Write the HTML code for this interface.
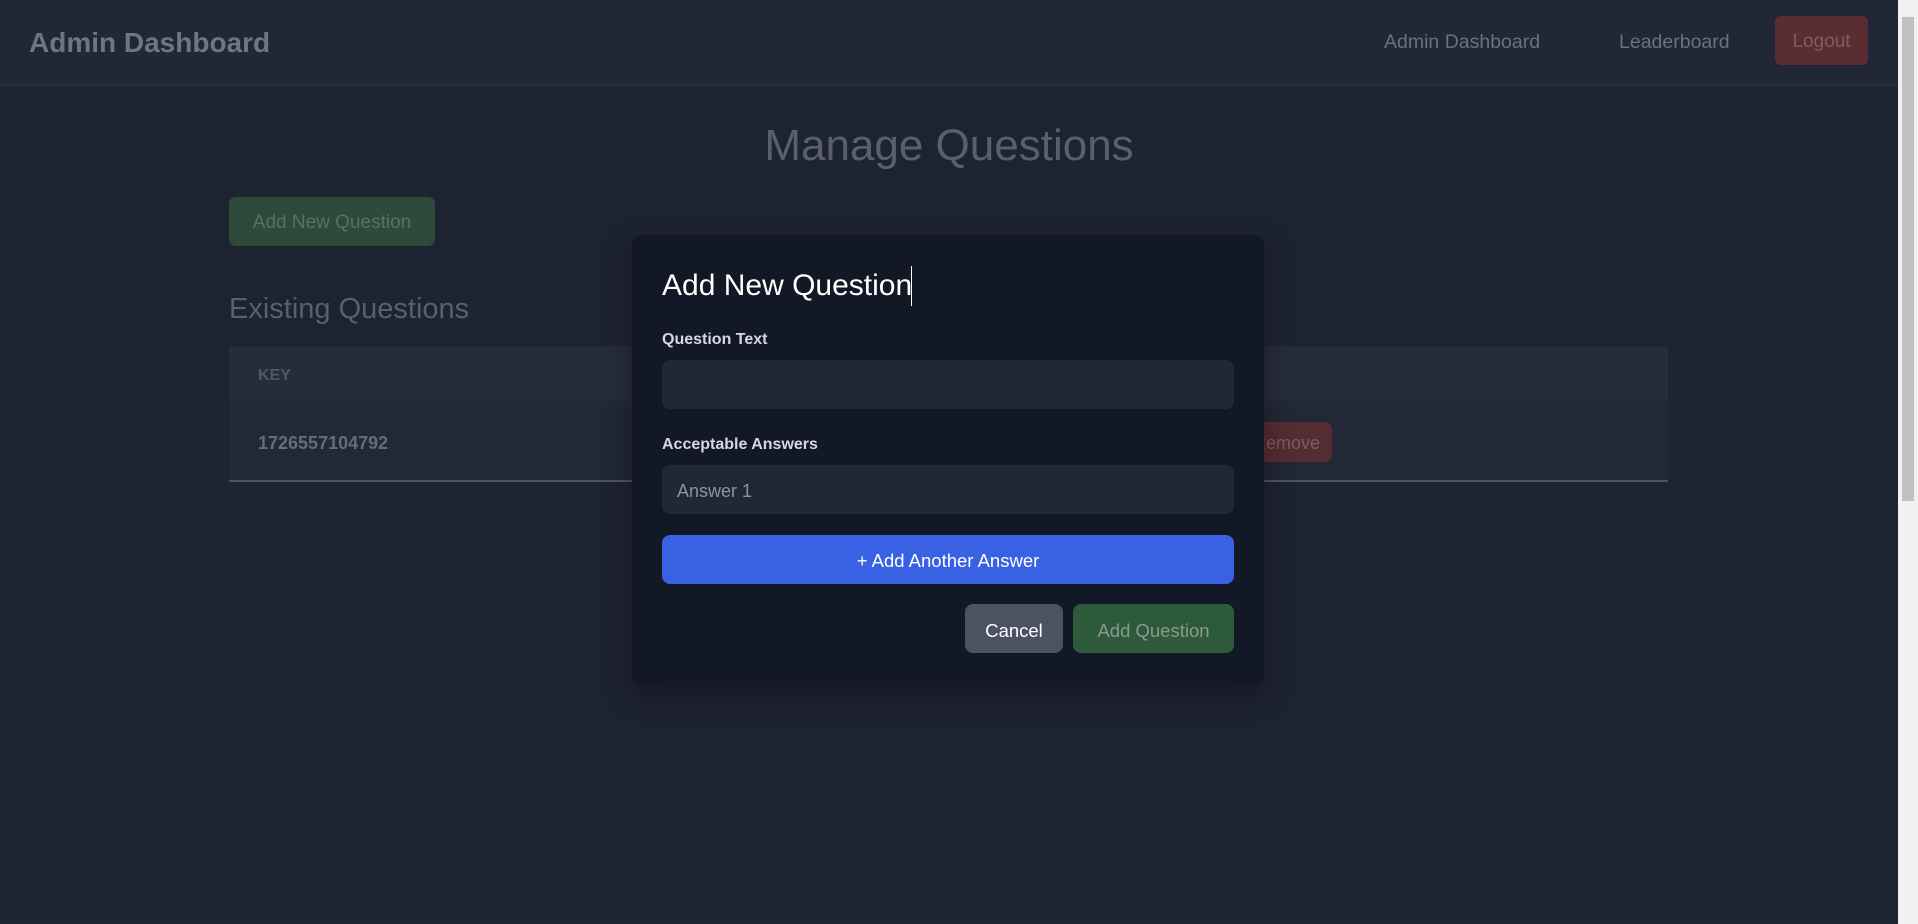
<!DOCTYPE html>
<html><head><meta charset="utf-8"><style>
*{box-sizing:border-box;margin:0;padding:0}
body{width:1918px;height:924px;overflow:hidden;background:#1e2331;font-family:"Liberation Sans",sans-serif;position:relative}
.a{position:absolute;white-space:nowrap}
.nav{position:absolute;left:0;top:0;width:1898px;height:86px;background:#212736;border-bottom:1px solid #2b3240}
.sb{position:absolute;left:1898px;top:0;width:20px;height:924px;background:#f1f1f1}
.thumb{position:absolute;left:1902px;top:17px;width:12px;height:484px;background:#c1c1c1}
.modal{position:absolute;left:632px;top:235px;width:632px;height:449px;background:#121826;border-radius:9px;box-shadow:0 10px 30px rgba(0,0,0,.35)}
.inp{position:absolute;left:30px;width:572px;height:49px;background:#212736;border-radius:8px}
.lbl{position:absolute;left:30px;font-size:16px;font-weight:bold;color:#d5d9df}
</style></head><body>
<div class="nav"></div>
<div class="a" style="left:29px;top:27px;font-size:28px;font-weight:bold;color:#6e7584">Admin Dashboard</div>
<div class="a" style="left:1384px;top:31px;font-size:19.5px;color:#6a7180">Admin Dashboard</div>
<div class="a" style="left:1619px;top:31px;font-size:19.5px;color:#6a7180">Leaderboard</div>
<div class="a" style="left:1775px;top:16px;width:93px;height:49px;background:#5a2d33;border-radius:6px;color:#7c5c62;font-size:19px;text-align:center;line-height:52px">Logout</div>
<div class="a" style="left:0;width:1898px;top:121px;text-align:center;font-size:44px;color:#595f6e">Manage Questions</div>
<div class="a" style="left:229px;top:197px;width:206px;height:49px;background:#2d4a3b;border-radius:7px;color:#5a7062;font-size:19px;text-align:center;line-height:51px">Add New Question</div>
<div class="a" style="left:229px;top:293px;font-size:29px;color:#595f6e">Existing Questions</div>
<div class="a" style="left:229px;top:346px;width:1439px;height:55px;background:#262c3a"></div>
<div class="a" style="left:229px;top:401px;width:1439px;height:81px;background:#222836;border-bottom:2px solid #4d5360"></div>
<div class="a" style="left:258px;top:367px;font-size:16px;font-weight:bold;color:#505765">KEY</div>
<div class="a" style="left:258px;top:433px;font-size:18px;font-weight:bold;color:#656c7a">1726557104792</div>
<div class="a" style="left:1220px;top:422px;width:112px;height:40px;background:#552c33;border-radius:7px;color:#7c5c62;font-size:18px;line-height:42px;text-align:right;padding-right:12px">Remove</div>
<div class="modal">
<div class="a" style="left:30px;top:34px;font-size:30px;color:#fff">Add New Question</div>
<div class="a" style="left:279px;top:31px;width:1px;height:40px;background:#fff"></div>
<div class="lbl" style="top:96px">Question Text</div>
<div class="inp" style="top:125px"></div>
<div class="lbl" style="top:201px">Acceptable Answers</div>
<div class="inp" style="top:230px;color:#8d939e;font-size:18px;line-height:52px;padding-left:15px">Answer 1</div>
<div class="a" style="left:30px;top:300px;width:572px;height:49px;background:#3861e3;border-radius:8px;color:#fff;font-size:18.5px;text-align:center;line-height:52px">+ Add Another Answer</div>
<div class="a" style="left:333px;top:369px;width:98px;height:49px;background:#4b5261;border-radius:8px;color:#fff;font-size:18.5px;text-align:center;line-height:53px">Cancel</div>
<div class="a" style="left:441px;top:369px;width:161px;height:49px;background:#2e5a3c;border-radius:8px;color:#8a9a8f;font-size:18.5px;text-align:center;line-height:53px">Add Question</div>
</div>
<div class="sb"></div><div class="thumb"></div>
</body></html>
